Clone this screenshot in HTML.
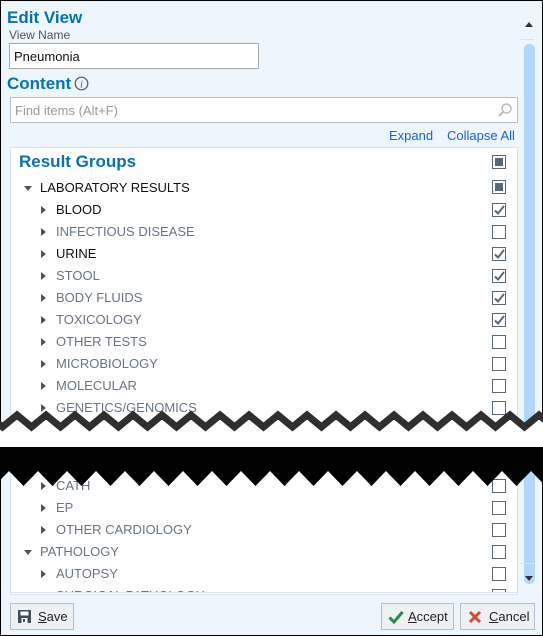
<!DOCTYPE html>
<html><head><style>
*{margin:0;padding:0;box-sizing:border-box}
body{width:543px;height:636px;overflow:hidden;font-family:"Liberation Sans",Arial,sans-serif;position:relative;background:#fff}
.frame{position:absolute;left:0;top:0;width:543px;height:636px;border:1px solid #000;background:#edf5fd}
.abs{position:absolute}
.h{color:#0a72b3;font-weight:bold;font-size:16px}
.panel{position:absolute;left:10px;top:147px;width:508px;background:#fff;border:1px solid #dde3ea;overflow:hidden}
.row{position:absolute;height:22px;line-height:22px;font-size:13px;white-space:nowrap}
.g{color:#687684}
.d{color:#111}
.cb{position:absolute;left:481px;width:14px;height:14px;border:1px solid #5a6876;background:#fff}
.cb.f::after{content:"";position:absolute;left:2px;top:2px;width:8px;height:8px;background:#5a6876}
.cb.c svg{position:absolute;left:0;top:0}
.tr{position:absolute;width:0;height:0;border-top:4px solid transparent;border-bottom:4px solid transparent;border-left:5px solid #4a5866}
.td{position:absolute;width:0;height:0;border-left:4.5px solid transparent;border-right:4.5px solid transparent;border-top:5px solid #4a5866}
.btn{position:absolute;top:603px;height:27px;border:1px solid #b8bec4;background:#eef1f4;font-size:13px;line-height:25px;color:#222}
</style></head><body>
<div class="frame"></div>
<div class="abs h" style="left:7px;top:8px;font-size:17px">Edit View</div>
<div class="abs" style="left:9px;top:28px;font-size:12px;color:#555">View Name</div>
<div class="abs" style="left:9px;top:43px;width:250px;height:26px;border:1px solid #a9a9a9;background:#fff;font-size:13px;padding:5px 4px;color:#111">Pneumonia</div>
<div class="abs h" style="left:7px;top:74px;font-size:17px">Content</div>
<svg class="abs" style="left:74px;top:76px" width="15" height="15"><circle cx="7.5" cy="7.5" r="6.3" fill="none" stroke="#555" stroke-width="1.2"/><text x="7.5" y="11.5" font-size="10" font-style="italic" font-family="Liberation Serif" text-anchor="middle" fill="#555">i</text></svg>
<div class="abs" style="left:10px;top:97px;width:508px;height:26px;border:1px solid #b9bec4;background:#fff;font-size:13px;padding:5px 4px;color:#9a9a9a">Find items (Alt+F)</div>
<svg class="abs" style="left:497px;top:102px" width="16" height="16"><circle cx="9.5" cy="6.5" r="4.5" fill="none" stroke="#bbb" stroke-width="1.5"/><line x1="6" y1="10" x2="2" y2="14" stroke="#bbb" stroke-width="2"/></svg>
<div class="abs" style="left:389px;top:128px;font-size:13px;color:#1e5ee0">Expand</div>
<div class="abs" style="left:447px;top:128px;font-size:13px;color:#1e5ee0">Collapse All</div>
<div class="abs" style="left:520px;top:39px;width:14px;height:1px;background:#d5e4f3"></div>
<div class="abs" style="left:524px;top:44px;width:11px;height:540px;border-radius:5px;background:#b1d7fb"></div>
<div class="abs" style="width:0;height:0;border-left:4px solid transparent;border-right:4px solid transparent;border-bottom:5px solid #333;left:525px;top:22px"></div>
<div class="abs" style="left:525px;top:576px;width:0;height:0;border-left:4px solid transparent;border-right:4px solid transparent;border-top:5px solid #333"></div>
<div class="abs" style="left:520px;top:563px;width:14px;height:1px;background:#d5e4f3"></div>

<div class="panel" style="height:448px">
 <div class="row h" style="left:8px;top:3px;font-size:17px">Result Groups</div><div class="cb f" style="top:7px"></div>
 <div class="td" style="left:13px;top:38px"></div><div class="row d" style="left:29px;top:29px">LABORATORY RESULTS</div><div class="cb f" style="top:32px"></div>
 <div id="rows1"></div>
</div>
<div class="panel" style="top:470px;height:123px;border-top:none">
 <div id="rows2"></div>
</div>
<svg class="abs" style="left:0;top:400px" width="543" height="95">
 <polygon id="wt" fill="#fff" points=""/>
 <polyline id="zz" fill="none" stroke="#2f2f2f" stroke-width="7" points=""/>
 <polygon id="bk" fill="#000" points=""/>
</svg>
<div class="btn" style="left:10px;width:64px"><svg class="abs" style="left:7px;top:6px" width="13" height="13"><rect x="0" y="0" width="13" height="13" fill="#3f4e5c"/><rect x="2.5" y="1.5" width="8" height="4" fill="#fff"/><rect x="3.5" y="8" width="6" height="5" fill="#fff"/><rect x="5" y="9" width="2" height="3" fill="#3f4e5c"/></svg><span class="abs" style="left:27px"><u>S</u>ave</span></div>
<div class="btn" style="left:381px;width:73px"><svg class="abs" style="left:6px;top:6px" width="16" height="14"><path d="M1.5 7.5 L6 12 L14.5 2" fill="none" stroke="#2d8a4e" stroke-width="3"/></svg><span class="abs" style="left:26px"><u>A</u>ccept</span></div>
<div class="btn" style="left:460px;width:75px"><svg class="abs" style="left:7px;top:6px" width="14" height="14"><path d="M2 2 L12 12 M12 2 L2 12" stroke="#d34a2e" stroke-width="3"/></svg><span class="abs" style="left:28px"><u>C</u>ancel</span></div>
<script>
function chk(){return '<svg width="12" height="12"><path d="M2 6.5 L5 9.5 L11 2" fill="none" stroke="#5a6876" stroke-width="2"/></svg>';}
function rows(list,start){let h='';list.forEach((r,i)=>{const t=start+i*22;
 if(r[3]) h+=`<div class="td" style="left:13px;top:${t+9}px"></div><div class="row ${r[1]}" style="left:29px;top:${t}px">${r[0]}</div>`;
 else h+=`<div class="tr" style="left:30px;top:${t+7}px"></div><div class="row ${r[1]}" style="left:45px;top:${t}px">${r[0]}</div>`;
 h+=`<div class="cb ${r[2]?'c':''}" style="top:${t+4}px">${r[2]?chk():''}</div>`;});return h;}
document.getElementById('rows1').innerHTML=rows([["BLOOD","d",1],["INFECTIOUS DISEASE","g",0],["URINE","d",1],["STOOL","g",1],["BODY FLUIDS","g",1],["TOXICOLOGY","g",1],["OTHER TESTS","g",0],["MICROBIOLOGY","g",0],["MOLECULAR","g",0],["GENETICS/GENOMICS","g",0],["","g",0]],51);
document.getElementById('rows2').innerHTML=rows([["CATH","g",0],["EP","g",0],["OTHER CARDIOLOGY","g",0],["PATHOLOGY","g",0,1],["AUTOPSY","g",0],["SURGICAL PATHOLOGY","g",0]],5);
let z=[],w=[],b=[];const P=29;
for(let x=-12;x<=560;x+=P){z.push(`${x},${15}`);z.push(`${x+P/2},${27}`);}
document.getElementById('zz').setAttribute('points',z.join(' '));
w=z.slice();w.push('560,47','-12,47');
document.getElementById('wt').setAttribute('points',w.join(' '));
b.push('-5,47','560,47');for(let x=560;x>=-12;x-=P){b.push(`${x},71`);b.push(`${x-P/2},86`);}
document.getElementById('bk').setAttribute('points',b.join(' '));
</script>
</body></html>
